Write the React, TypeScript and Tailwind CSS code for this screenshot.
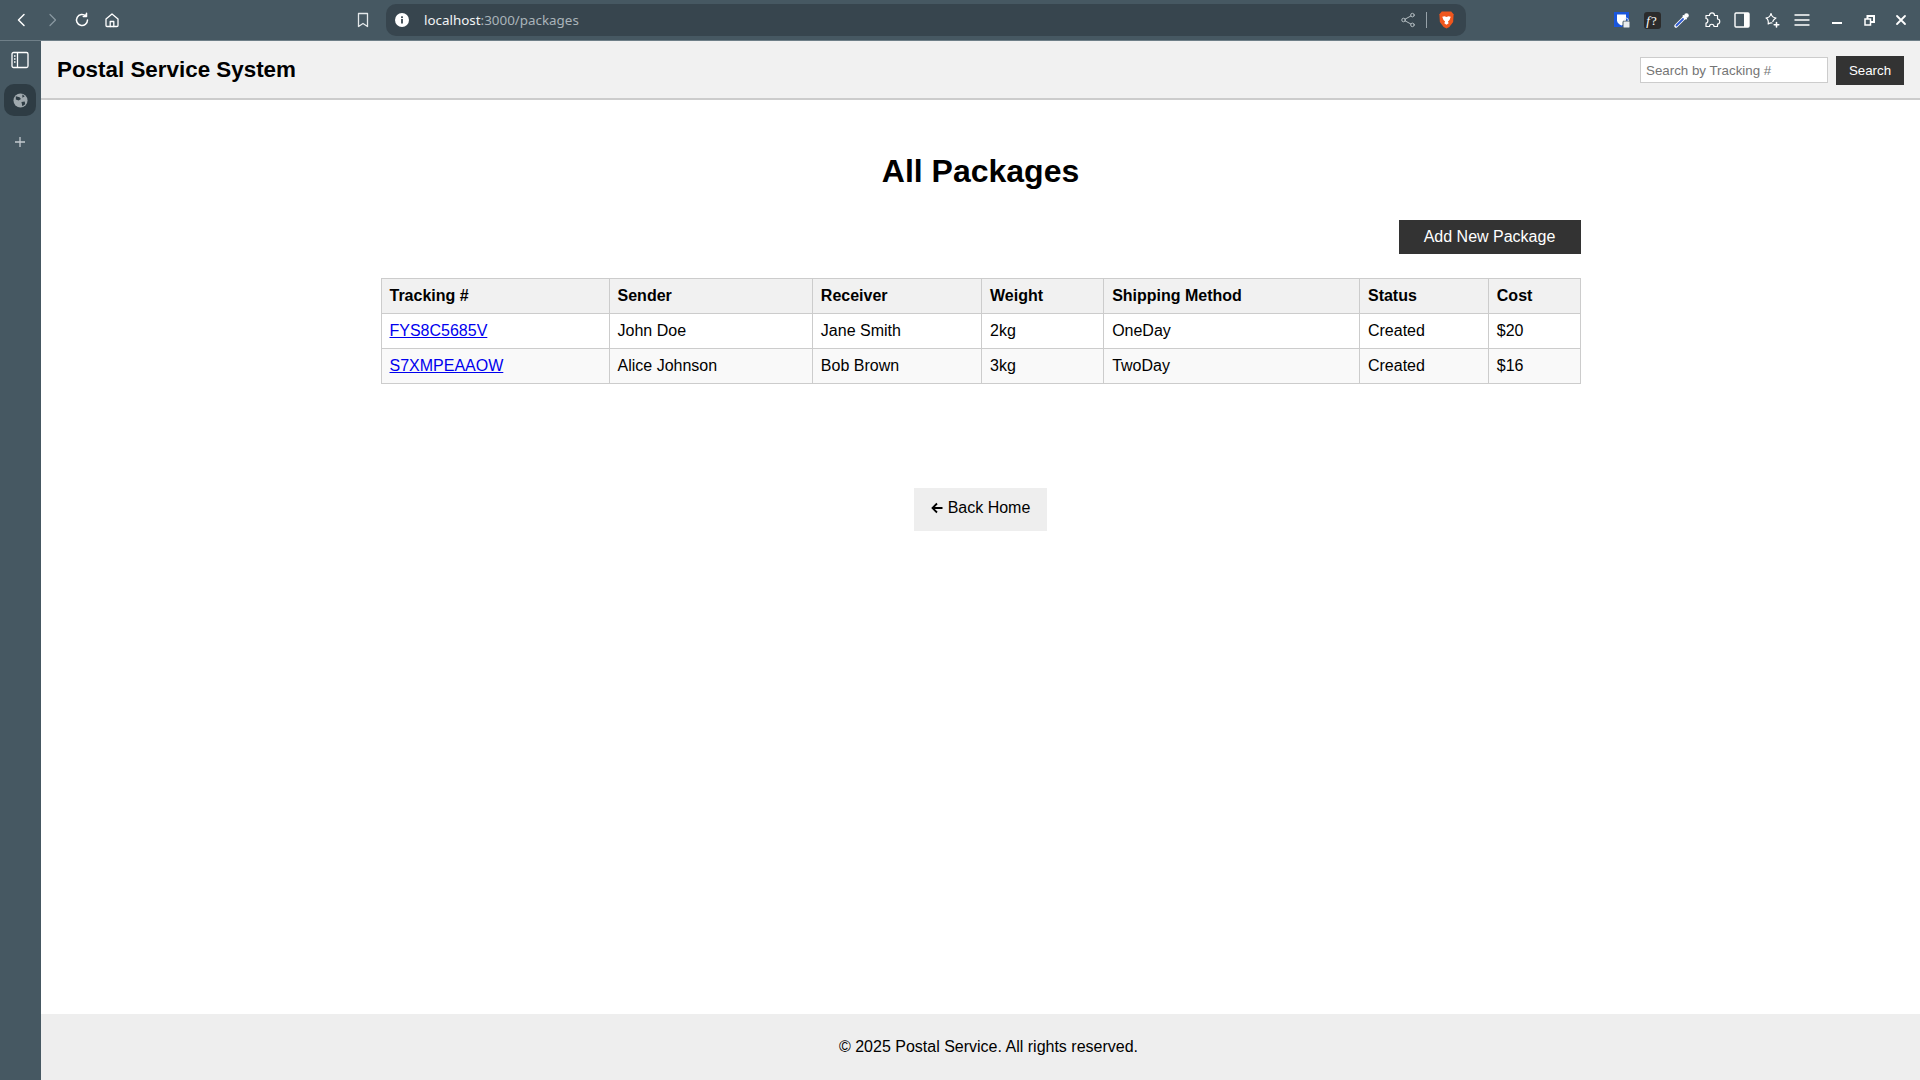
import React from 'react';

const packages = [
  { id: 'FYS8C5685V', sender: 'John Doe', receiver: 'Jane Smith', weight: '2kg', method: 'OneDay', status: 'Created', cost: '$20' },
  { id: 'S7XMPEAAOW', sender: 'Alice Johnson', receiver: 'Bob Brown', weight: '3kg', method: 'TwoDay', status: 'Created', cost: '$16' },
];

const headers = ['Tracking #', 'Sender', 'Receiver', 'Weight', 'Shipping Method', 'Status', 'Cost'];

const Slot: React.FC<{ children: React.ReactNode; w?: string }> = ({ children, w = 'w-[30px]' }) => (
  <div className={`${w} h-full flex items-center justify-center shrink-0`}>{children}</div>
);

const Icon: React.FC<{ children: React.ReactNode; size?: number; color?: string; sw?: number }> = ({ children, size = 18, color = '#ffffff', sw = 1.5 }) => (
  <svg width={size} height={size} viewBox="0 0 18 18" fill="none" stroke={color} strokeWidth={sw} strokeLinecap="round" strokeLinejoin="round">
    {children}
  </svg>
);

const BrowserBar = () => (
  <div className="h-[41px] flex items-center bg-[#465862] border-b border-[#6f7f88] font-['Noto_Sans',sans-serif]">
    <div className="w-[7px] shrink-0" />
    <Slot><Icon><path d="M11 3.5 5.500 9l5.500 5.500" /></Icon></Slot>
    <Slot><Icon color="#8b99a1" sw={1.2}><path d="M7 3.500 12.500 9 7 14.500" /></Icon></Slot>
    <Slot><Icon><path d="M14.500 9a5.500 5.500 0 1 1-1.700-4" /><path d="M13.500 2.200v3.200h-3.200" fill="#ffffff" /></Icon></Slot>
    <Slot><Icon sw={1.3}><path d="M3 8 9 3l6 5v6.500a1 1 0 0 1-1 1H4a1 1 0 0 1-1-1Z" /><path d="M7.200 15.500V10.500h3.600v5" /></Icon></Slot>
    <div className="w-[221px] shrink-0" />
    <Slot><Icon sw={1.3} color="#e4e8ea"><path d="M4.500 2.500h9v13L9 12.500l-4.500 3Z" /></Icon></Slot>
    <div className="w-[8px] shrink-0" />
    <div className="w-[1080px] h-[32px] shrink-0 rounded-[10px] bg-[#37454e] flex items-center">
      <div className="ml-[9px] w-[14px] h-[14px] rounded-full bg-white flex items-center justify-center">
        <svg width="14" height="14" viewBox="0 0 14 14"><rect x="6.100" y="6" width="1.800" height="4.500" fill="#37454e" /><rect x="6.100" y="3.300" width="1.800" height="1.800" fill="#37454e" /></svg>
      </div>
      <div className="ml-[15px] mt-[1px] text-[13.4px] leading-none text-[#f2f4f5] font-['Noto_Sans',sans-serif]">
        localhost<span className="text-[#aab4ba]">:3000/packages</span>
      </div>
      <div className="ml-auto flex items-center">
        <Icon size={16} color="#b5bec3" sw={1.1}>
          <circle cx="4" cy="9" r="2" /><circle cx="14" cy="3.500" r="2" /><circle cx="14" cy="14.500" r="2" /><path d="M5.800 8 12.200 4.500M5.800 10l6.400 3.500" />
        </Icon>
        <div className="w-px h-[16px] bg-[#97a2a9] ml-[10px] mr-[11px]" />
        <svg width="17" height="20" viewBox="0 0 18 20" className="mr-[11px]">
          <path d="M4 1h10l2.500 3-.5 8-4 5.500L9 19l-3-1.500L2 12l-.5-8Z" fill="#f0561d" />
          <path d="M4.500 6.500 7 6l2 .8 2-.8 2.500.5-1.300 3.500-1.700 1.500.8 2L9 15l-2.300-1.500.8-2L5.800 10Z" fill="#ffffff" />
        </svg>
      </div>
    </div>
    <div className="w-[141px] shrink-0" />
    <Slot>
      <svg width="18" height="18" viewBox="0 0 18 18">
        <rect x="1" y="1" width="15" height="15" fill="#1a56db" />
        <path d="M4 3.500h9v6c0 2.500-2.500 4-4.500 5C6.500 13.500 4 12 4 9.500Z" fill="#ffffff" />
        <rect x="10" y="10" width="7" height="7" rx="1" fill="#e8ebed" stroke="#465862" />
        <path d="M11.800 10V8.800a1.700 1.700 0 0 1 3.400 0V10" fill="none" stroke="#e8ebed" strokeWidth="1" />
      </svg>
    </Slot>
    <Slot>
      <div className="w-[17px] h-[17px] rounded-[3px] bg-[#2b2b2b] flex items-center justify-center text-white text-[13px] leading-none tracking-[1px] font-['Liberation_Serif',serif]"><i>f</i>?</div>
    </Slot>
    <Slot>
      <svg width="18" height="18" viewBox="0 0 18 18" fill="none" strokeLinecap="round">
        <path d="M3 15 11 7" stroke="#ffffff" strokeWidth="3.500" />
        <path d="M3.500 14.500 10 8" stroke="#2f5bd0" strokeWidth="1.800" />
        <path d="M10.500 5 13 7.500" stroke="#ffffff" strokeWidth="2" />
        <circle cx="13.500" cy="4.500" r="2.300" fill="#ffffff" />
      </svg>
    </Slot>
    <Slot>
      <Icon sw={1.2}><path d="M6.500 4.500c0-3.500 5-3.500 5 0h3v3.500c3 0 3 5 0 5v2.500h-3.500c0-3-4.500-3-4.500 0H3v-3.500c2.500 0 2.500-4.500 0-4.500V4.500Z" /></Icon>
    </Slot>
    <Slot>
      <svg width="16" height="16" viewBox="0 0 16 16"><rect x="1" y="1" width="14" height="14" rx="1" fill="none" stroke="#ffffff" strokeWidth="1.400" /><rect x="10" y="1" width="5" height="14" fill="#ffffff" /></svg>
    </Slot>
    <Slot>
      <Icon sw={1.2}><path d="M8 2.500c.7 3 1.600 3.800 5 4.500-2 1.200-2.700 2-3.200 3.500M8 2.500C7.300 5.500 6.400 6.300 3 7c2.400 1.300 2.700 2.700 2.200 6 1.600-1 2.600-1.300 3.800-1" /><path d="M13.500 11.500v4.500M11.200 13.700h4.600" strokeWidth="1.600" /></Icon>
    </Slot>
    <Slot>
      <Icon sw={1.4}><path d="M2 4h14M2 9h14M2 14h14" /></Icon>
    </Slot>
    <div className="w-[4px] shrink-0" />
    <Slot w="w-[32px]"><div className="w-[10px] h-[2px] bg-white mt-[6px]" /></Slot>
    <Slot w="w-[32px]">
      <svg width="11" height="11" viewBox="0 0 11 11"><rect x="3.500" y="1" width="6.500" height="6" fill="none" stroke="#ffffff" strokeWidth="2" /><rect x="1" y="4" width="5.500" height="6" fill="#465862" stroke="#ffffff" strokeWidth="1.500" /></svg>
    </Slot>
    <Slot w="w-[32px]">
      <svg width="12" height="12" viewBox="0 0 12 12"><path d="M2 2l8 8M10 2l-8 8" stroke="#ffffff" strokeWidth="1.800" strokeLinecap="round" /></svg>
    </Slot>
  </div>
);

const SideBar = () => (
  <div className="w-[41px] shrink-0 bg-[#465862] flex flex-col items-center pr-[1px]">
    <div className="mt-[9px] h-[20px] flex items-center justify-center">
      <svg width="18" height="18" viewBox="0 0 18 18" fill="none" stroke="#ffffff" strokeWidth="1.300">
        <rect x="1" y="1.500" width="16" height="15" rx="1.500" />
        <path d="M6.500 1.500v15" />
        <path d="M3 5h1.500M3 8h1.500M3 11h1.500" strokeWidth="1.500" />
      </svg>
    </div>
    <div className="mt-[14px] w-[32px] h-[32px] rounded-[10px] bg-[#2e3c44] flex items-center justify-center">
      <svg width="15" height="15" viewBox="0 0 16 16">
        <circle cx="8" cy="8" r="7.500" fill="#a0a9ae" />
        <path d="M3 3.500 7 4.500 8.500 6.500 6 8 3 7ZM9 9.500l3.500-.5.500 3-3 2Z M10 1.500l2.500 2L10 5Z" fill="#2e3c44" />
      </svg>
    </div>
    <div className="mt-[21px] h-[10px] flex items-center justify-center">
      <svg width="12" height="12" viewBox="0 0 12 12"><path d="M6 1v10M1 6h10" stroke="#c3cacf" strokeWidth="1.300" /></svg>
    </div>
  </div>
);

const App: React.FC = () => {
  return (
    <div className="h-[1080px] w-[1920px] flex flex-col overflow-hidden bg-white text-black font-['Liberation_Sans',Arial,sans-serif]">
      <BrowserBar />
      <div className="flex-1 flex min-h-0">
        <SideBar />
        <div className="flex-1 flex flex-col min-w-0">
          <header className="h-[59px] flex items-center justify-between bg-[#f1f1f1] border-b-2 border-[#cccccc] px-4">
            <h1 className="text-[22.4px] font-bold leading-[28px]">Postal Service System</h1>
            <form className="flex items-center gap-2 mt-[1px]" onSubmit={(e) => e.preventDefault()}>
              <input
                placeholder="Search by Tracking #"
                className="w-[188px] h-[26px] px-[5px] bg-white border border-[#cccccc] text-[13.33px] outline-none placeholder:text-[#757575]"
              />
              <button className="w-[68px] h-[29px] pt-[1px] bg-[#333333] text-white text-[13.33px]">Search</button>
            </form>
          </header>

          <main className="flex-1 flex flex-col">
            <div className="w-[1200px] mx-auto">
              <h2 className="mt-[53px] text-center text-[32px] font-bold leading-[37px]">All Packages</h2>
              <div className="mt-[30px] flex justify-end">
                <button className="w-[182px] h-[34px] bg-[#333333] text-white text-[16px]">Add New Package</button>
              </div>
              <table className="mt-[24px] w-full border-collapse text-[16px] leading-[18px]">
                <thead>
                  <tr className="bg-[#f1f1f1]">
                    {headers.map((h) => (
                      <th key={h} className="border border-[#cccccc] p-2 text-left font-bold">{h}</th>
                    ))}
                  </tr>
                </thead>
                <tbody>
                  {packages.map((p, i) => (
                    <tr key={p.id} className={i % 2 === 1 ? 'bg-[#f9f9f9]' : 'bg-white'}>
                      <td className="border border-[#cccccc] p-2"><a href="#" className="text-[#0000ee] underline">{p.id}</a></td>
                      <td className="border border-[#cccccc] p-2">{p.sender}</td>
                      <td className="border border-[#cccccc] p-2">{p.receiver}</td>
                      <td className="border border-[#cccccc] p-2">{p.weight}</td>
                      <td className="border border-[#cccccc] p-2">{p.method}</td>
                      <td className="border border-[#cccccc] p-2">{p.status}</td>
                      <td className="border border-[#cccccc] p-2">{p.cost}</td>
                    </tr>
                  ))}
                </tbody>
              </table>
              <div className="mt-[104px] flex justify-center">
                <a href="#" className="h-[43px] px-[17px] flex items-center gap-[5px] bg-[#eeeeee] text-[16px] pb-[3px]">
                  <svg width="12" height="12" viewBox="0 0 12 12" fill="none" stroke="#000000" strokeWidth="1.800"><path d="M6 1.500 1.500 6 6 10.500M1.500 6H11.500" /></svg>
                  Back Home
                </a>
              </div>
            </div>
          </main>

          <footer className="h-[66px] flex items-center justify-center bg-[#eeeeee] text-[16px] pl-[16px]">
            © 2025 Postal Service. All rights reserved.
          </footer>
        </div>
      </div>
    </div>
  );
};

export default App;
